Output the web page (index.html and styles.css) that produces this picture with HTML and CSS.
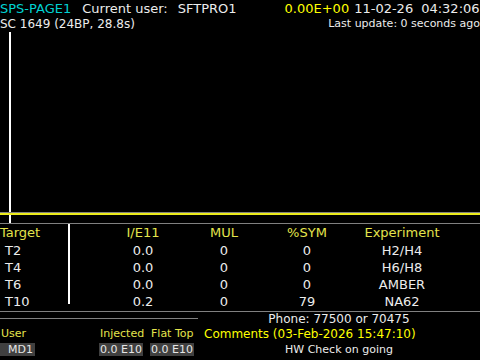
FILE: index.html
```html
<!DOCTYPE html>
<html lang="en">
<head>
  <meta charset="UTF-8">
  <meta name="viewport" content="width=device-width, initial-scale=1.0">
  <title>SPS-PAGE1</title>
  <link rel="stylesheet" href="styles.css">
</head>
<body>
  <div class="page">
    <div class="header">
      <div class="header-row">
        <span class="page-name">SPS-PAGE1</span>
        <span class="user-label">Current user:</span>
        <span class="user-name">SFTPRO1</span>
        <span class="intensity">0.00E+00</span>
        <span class="date">11-02-26</span>
        <span class="time">04:32:06</span>
      </div>
      <div class="header-row sub">
        <span class="cycle">SC 1649 (24BP, 28.8s)</span>
        <span class="updated">Last update: 0 seconds ago</span>
      </div>
    </div>

    <div class="chart">
      <svg width="480" height="193" viewBox="0 0 480 193">
        <rect x="9" y="2" width="2" height="191" fill="#ffffff"/>
        <rect x="0" y="182" width="480" height="1" fill="#808080"/>
        <rect x="0" y="183" width="480" height="2" fill="#ecec1c"/>
      </svg>
    </div>

    <div class="table">
      <div class="col col-target">
        <div class="th">Target</div>
        <div class="td">T2</div>
        <div class="td">T4</div>
        <div class="td">T6</div>
        <div class="td">T10</div>
      </div>
      <div class="col col-ie">
        <div class="th">I/E11</div>
        <div class="td">0.0</div>
        <div class="td">0.0</div>
        <div class="td">0.0</div>
        <div class="td">0.2</div>
      </div>
      <div class="col col-mul">
        <div class="th">MUL</div>
        <div class="td">0</div>
        <div class="td">0</div>
        <div class="td">0</div>
        <div class="td">0</div>
      </div>
      <div class="col col-sym">
        <div class="th">%SYM</div>
        <div class="td">0</div>
        <div class="td">0</div>
        <div class="td">0</div>
        <div class="td">79</div>
      </div>
      <div class="col col-exp">
        <div class="th">Experiment</div>
        <div class="td">H2/H4</div>
        <div class="td">H6/H8</div>
        <div class="td">AMBER</div>
        <div class="td">NA62</div>
      </div>
    </div>

    <div class="footer">
      <div class="beam-info">
        <div class="field user">
          <div class="label">User</div>
          <div class="value">MD1</div>
        </div>
        <div class="field">
          <div class="label">Injected</div>
          <div class="value">0.0 E10</div>
        </div>
        <div class="field">
          <div class="label">Flat Top</div>
          <div class="value">0.0 E10</div>
        </div>
      </div>
      <div class="notes">
        <div class="phone">Phone: 77500 or 70475</div>
        <div class="comments">Comments (03-Feb-2026 15:47:10)</div>
        <div class="comment-text">HW Check on going</div>
      </div>
    </div>
  </div>
</body>
</html>
```

FILE: styles.css
```css
* {
  margin: 0;
  padding: 0;
  box-sizing: border-box;
}

body {
  background: #000;
  color: #ececec;
  font-family: 'DejaVu Sans', 'Liberation Sans', sans-serif;
  width: 480px;
  height: 360px;
  overflow: hidden;
}

.page {
  display: flex;
  flex-direction: column;
  height: 360px;
}

/* header */
.header {
  height: 30px;
  display: flex;
  flex-direction: column;
}

.header-row {
  display: flex;
  align-items: center;
  height: 16px;
  font-size: 13px;
  white-space: nowrap;
}

.header-row.sub {
  height: 14px;
  padding-top: 1px;
  justify-content: space-between;
}

.page-name {
  color: #00d2d2;
}

.user-label {
  margin-left: 11px;
}

.user-name {
  margin-left: 10px;
}

.intensity {
  color: #ffff00;
  margin-left: 48px;
}

.date {
  margin-left: 5px;
}

.time {
  margin-left: 8px;
}

.cycle {
  font-size: 12px;
}

.updated {
  font-size: 11px;
}

/* chart */
.chart {
  height: 193px;
  border-bottom: 1px solid #808080;
  box-sizing: content-box;
}

.chart svg {
  display: block;
}

/* target table */
.table {
  display: flex;
  height: 87px;
  font-size: 13px;
  border-bottom: 1px solid #808080;
  box-sizing: content-box;
}

.col {
  display: flex;
  flex-direction: column;
  text-align: center;
}

.th {
  height: 18px;
  line-height: 18px;
  color: #e4e44c;
}

.td {
  height: 17px;
  line-height: 17px;
  flex-shrink: 0;
}

.col-target {
  width: 70px;
  height: 80px;
  text-align: left;
  border-right: 2px solid #fff;
}

.col-target .td {
  padding-left: 5px;
}

.col-ie {
  width: 113px;
  padding-left: 33px;
}

.col-mul {
  width: 82px;
}

.col-sym {
  width: 84px;
}

.col-exp {
  width: 106px;
}

/* footer */
.footer {
  display: flex;
  flex: 1;
}

.beam-info {
  width: 198px;
  margin-top: 6px;
  padding-top: 7px;
  border-top: 1px solid #808080;
  display: grid;
  grid-template-columns: 99px 51px 48px;
  font-size: 11px;
  align-self: flex-start;
}

.field .label {
  height: 16px;
  line-height: 16px;
  color: #e4e44c;
  padding-left: 1px;
}

.field .value {
  display: inline-block;
  margin-top: 1px;
  background: #404040;
  color: #e6e6e6;
  height: 13px;
  line-height: 13px;
  padding: 0 1px;
}

.field.user .value {
  padding: 0 2px 0 8px;
}

.notes {
  flex: 1;
  display: flex;
  flex-direction: column;
}

.phone {
  height: 14px;
  line-height: 14px;
  font-size: 12px;
  text-align: center;
}

.comments {
  height: 16px;
  line-height: 16px;
  font-size: 12px;
  color: #ffff00;
  padding-left: 6px;
}

.comment-text {
  height: 16px;
  line-height: 16px;
  font-size: 11px;
  text-align: center;
}
```
